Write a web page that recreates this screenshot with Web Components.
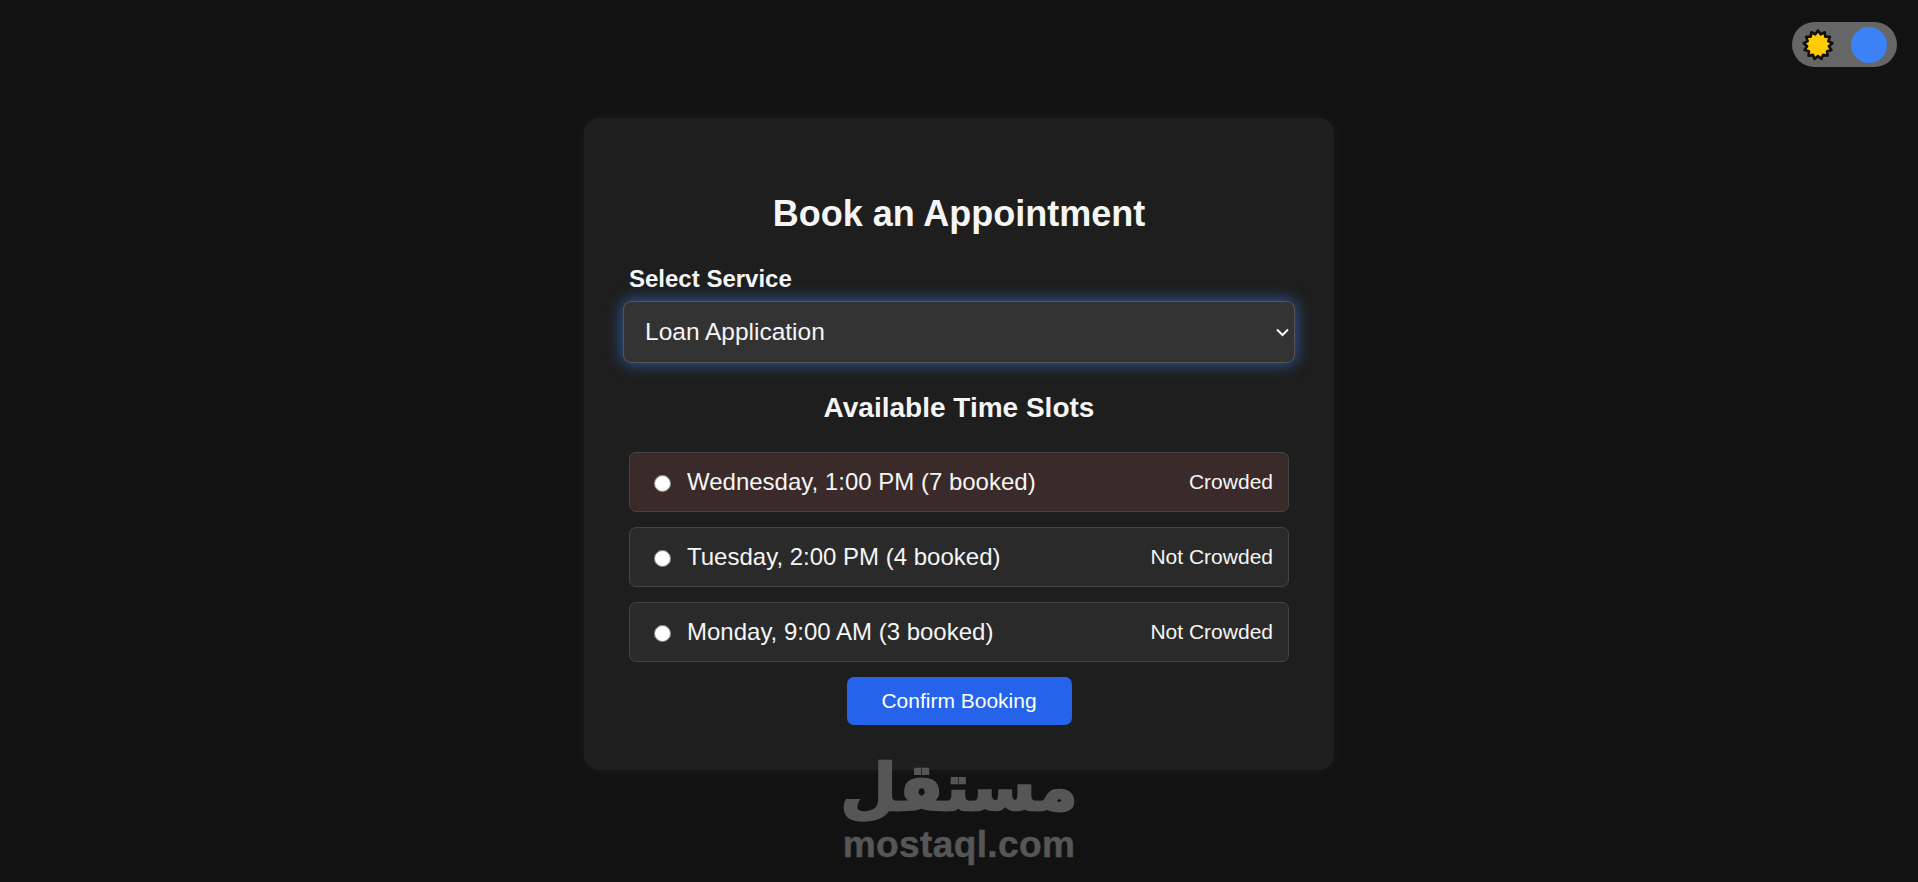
<!DOCTYPE html>
<html lang="en">
<head>
<meta charset="utf-8">
<title>Book an Appointment</title>
<style>
  html, body {
    margin: 0;
    height: 100%;
    background: #121212;
    color: #f5f5f5;
    font-family: "Liberation Sans", Arial, sans-serif;
  }
  body { overflow: hidden; }
</style>
</head>
<body>
<booking-page>
  <theme-toggle slot="top"></theme-toggle>
  <booking-card heading="Book an Appointment">
    <service-select label="Select Service" value="Loan Application"></service-select>
    <h3 slot="subheading">Available Time Slots</h3>
    <time-slot status="Crowded" crowded>Wednesday, 1:00 PM (7 booked)</time-slot>
    <time-slot status="Not Crowded">Tuesday, 2:00 PM (4 booked)</time-slot>
    <time-slot status="Not Crowded">Monday, 9:00 AM (3 booked)</time-slot>
    <confirm-button slot="action">Confirm Booking</confirm-button>
  </booking-card>
  <mostaql-mark slot="overlay"></mostaql-mark>
</booking-page>

<script>
customElements.define('booking-page', class BookingPage extends HTMLElement {
  constructor() {
    super();
    this.attachShadow({ mode: 'open' });
    this.shadowRoot.innerHTML = `<style>
  :host {
    display: flex;
    flex-direction: column;
    height: 882px;
    position: relative;
  }
  .top {
    display: flex;
    justify-content: flex-end;
    padding: 22px 21px 0 0;
    margin-bottom: 51px;
  }
  .main {
    display: flex;
    justify-content: center;
  }
</style>
<div class="top"><slot name="top"></slot></div>
<div class="main"><slot></slot></div>
<slot name="overlay"></slot>`;
  }
});

customElements.define('theme-toggle', class ThemeToggle extends HTMLElement {
  constructor() {
    super();
    this.attachShadow({ mode: 'open' });
    // sun outline is a 13 point star
    const points = [];
    for (let i = 0; i < 26; i++) {
      const r = i % 2 ? 11 : 14.4;
      const a = (i / 26) * Math.PI * 2 - Math.PI / 2;
      points.push((16 + r * Math.cos(a)).toFixed(2) + ',' + (16 + r * Math.sin(a)).toFixed(2));
    }
    this.shadowRoot.innerHTML = `<style>
  :host {
    display: flex;
    align-items: center;
    justify-content: space-between;
    width: 105px;
    height: 45px;
    box-sizing: border-box;
    padding: 0 10px 0 10px;
    border-radius: 23px;
    background: #666;
  }
  svg { display: block; margin-top: 1px; }
  .knob {
    width: 36px;
    height: 36px;
    border-radius: 50%;
    background: #3b82f6;
  }
</style>
<svg width="32" height="32" viewBox="0 0 32 32">
  <polygon points="${points.join(' ')}" fill="#ffcc00" stroke="#111" stroke-width="2.6" stroke-linejoin="round"/>
</svg>
<div class="knob"></div>`;
  }
});

customElements.define('booking-card', class BookingCard extends HTMLElement {
  static get observedAttributes() {
    return ['heading'];
  }

  constructor() {
    super();
    this.attachShadow({ mode: 'open' });
    this.shadowRoot.innerHTML = `<style>
  :host {
    display: block;
    width: 750px;
    height: 652px;
    box-sizing: border-box;
    padding: 75px 45px 0;
    border-radius: 15px;
    background: #1e1e1e;
    box-shadow: 0 0 16px rgba(255, 255, 255, 0.04);
  }
  h2 {
    margin: 0 0 31px;
    font-size: 36px;
    line-height: 41px;
    font-weight: 700;
    text-align: center;
    color: #f5f5f5;
  }
  ::slotted(h3) {
    margin: 30px 0 29px;
    font-size: 28px;
    line-height: 30px;
    font-weight: 700;
    text-align: center;
    color: #f5f5f5;
  }
  .slots {
    display: flex;
    flex-direction: column;
    gap: 15px;
  }
  .action {
    display: flex;
    justify-content: center;
    margin-top: 15px;
  }
</style>
<h2></h2>
<slot name="select"></slot>
<slot name="subheading"></slot>
<div class="slots"><slot></slot></div>
<div class="action"><slot name="action"></slot></div>`;
  }

  connectedCallback() {
    this.shadowRoot.querySelector('h2').textContent = this.getAttribute('heading');
    const select = this.querySelector('service-select');
    if (select) select.slot = 'select';
  }
});

customElements.define('service-select', class ServiceSelect extends HTMLElement {
  constructor() {
    super();
    this.attachShadow({ mode: 'open' });
    this.shadowRoot.innerHTML = `<style>
  :host {
    display: block;
  }
  label {
    display: block;
    font-size: 24px;
    line-height: 28px;
    font-weight: 700;
    color: #f5f5f5;
    margin-bottom: 8px;
  }
  .field {
    position: relative;
    width: 672px;
    margin: 0 -6px;
  }
  select {
    display: block;
    width: 100%;
    height: 62px;
    padding: 0 16px 2px 21px;
    box-sizing: border-box;
    appearance: none;
    font: 24.5px "Liberation Sans", Arial, sans-serif;
    color: #f5f5f5;
    background-color: #333;
    border: 1px solid #555;
    border-radius: 8px;
    outline: none;
    box-shadow: 0 0 15px 1px rgba(59, 130, 246, 0.6);
  }
  svg {
    position: absolute;
    right: 6px;
    top: 27px;
    pointer-events: none;
  }
</style>
<label for="service"></label>
<div class="field">
  <select id="service"></select>
  <svg width="13" height="9" viewBox="0 0 13 9"><path d="M1 1.5 6.5 7 12 1.5" fill="none" stroke="#f5f5f5" stroke-width="2"/></svg>
</div>`;
  }

  connectedCallback() {
    this.shadowRoot.querySelector('label').textContent = this.getAttribute('label');
    const option = document.createElement('option');
    option.textContent = this.getAttribute('value');
    this.shadowRoot.querySelector('select').append(option);
  }
});

customElements.define('time-slot', class TimeSlot extends HTMLElement {
  constructor() {
    super();
    this.attachShadow({ mode: 'open' });
    this.shadowRoot.innerHTML = `<style>
  :host {
    display: flex;
    align-items: center;
    height: 60px;
    box-sizing: border-box;
    padding: 0 15px 0 24px;
    border: 1px solid #444;
    border-radius: 7px;
    background: #2a2a2a;
    color: #f5f5f5;
    font-size: 24px;
  }
  :host([crowded]) {
    background: #3b2a2a;
  }
  input {
    width: 17px;
    height: 17px;
    margin: 3px 16px 0 0;
    flex: none;
  }
  .label {
    flex: 1;
  }
  .status {
    font-size: 21px;
  }
</style>
<input type="radio" name="slot">
<span class="label"><slot></slot></span>
<span class="status"></span>`;
  }

  connectedCallback() {
    this.shadowRoot.querySelector('.status').textContent = this.getAttribute('status');
  }
});

customElements.define('confirm-button', class ConfirmButton extends HTMLElement {
  constructor() {
    super();
    this.attachShadow({ mode: 'open' });
    this.shadowRoot.innerHTML = `<style>
  :host {
    display: block;
  }
  button {
    display: block;
    width: 225px;
    height: 48px;
    padding: 0;
    border: 0;
    border-radius: 7px;
    background: #2563eb;
    color: #fff;
    font: 21px "Liberation Sans", Arial, sans-serif;
  }
</style>
<button type="button"><slot></slot></button>`;
  }
});

customElements.define('mostaql-mark', class MostaqlMark extends HTMLElement {
  constructor() {
    super();
    this.attachShadow({ mode: 'open' });
    this.shadowRoot.innerHTML = `<style>
  :host {
    position: absolute;
    left: 844px;
    top: 750px;
    width: 230px;
    display: flex;
    flex-direction: column;
    align-items: center;
    color: #565656;
    pointer-events: none;
  }
  .ar {
    font: 700 65px/76px "DejaVu Sans", sans-serif;
    -webkit-text-stroke: 2.5px #565656;
    white-space: nowrap;
  }
  .en {
    font: 700 37px/38px "Liberation Sans", Arial, sans-serif;
    letter-spacing: 0.4px;
    -webkit-text-stroke: 0.5px #565656;
    white-space: nowrap;
  }
</style>
<div class="ar" lang="ar" dir="rtl">مستقل</div>
<div class="en">mostaql.com</div>`;
  }
});
</script>
</body>
</html>
